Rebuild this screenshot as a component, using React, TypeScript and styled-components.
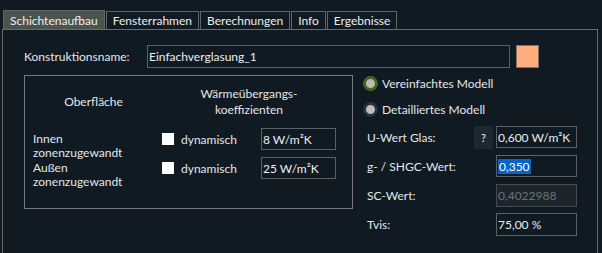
import React from 'react';
import styled, { createGlobalStyle } from 'styled-components';

const GlobalStyle = createGlobalStyle`
  body {
    margin: 0;
    background: #0f1a22;
    color: #e4e6e8;
    font-family: Lato, "Noto Sans", sans-serif;
    font-size: 12px;
  }
`;

const Page = styled.div`
  width: 602px;
  height: 253px;
  overflow: hidden;
  box-sizing: border-box;
  padding: 10px 0 0 2px;
`;

const TabBar = styled.div`
  display: flex;
  align-items: flex-end;
  gap: 1px;
  height: 19px;
  padding-left: 1px;
`;

const Tab = styled.div<{ $active?: boolean }>`
  box-sizing: border-box;
  height: ${p => (p.$active ? '19px' : '18px')};
  padding: 0 6px;
  display: flex;
  align-items: center;
  border: 1px solid #5f6467;
  border-bottom: none;
  background: ${p => (p.$active ? '#4b534c' : 'transparent')};
  color: #eceeef;
  white-space: nowrap;
`;

const Panel = styled.div`
  box-sizing: border-box;
  width: 596px;
  height: 240px;
  border: 1px solid #696d70;
  padding: 15px 0 0 18px;
`;

const NameRow = styled.div`
  display: grid;
  grid-template-columns: 120px 363px 23px;
  column-gap: 6px;
  align-items: center;
  height: 23px;
`;

const NameLabel = styled.span`
  padding-left: 3px;
`;

const Field = styled.div<{ $disabled?: boolean; $h?: number }>`
  box-sizing: border-box;
  height: ${p => p.$h ?? 22}px;
  border: 1px solid ${p => (p.$disabled ? '#454b50' : '#5c6165')};
  background: ${p => (p.$disabled ? '#1c252c' : 'transparent')};
  color: ${p => (p.$disabled ? '#6c7379' : '#eceeef')};
  display: flex;
  align-items: center;
  padding-left: 1px;
  white-space: nowrap;
`;

const Selected = styled.span`
  background: #0a63c6;
  color: #ffffff;
  padding: 0 1px;
`;

const Swatch = styled.div`
  box-sizing: border-box;
  width: 23px;
  height: 23px;
  background: #ffae80;
  border: 1px solid #8d6c5c;
`;

const MainRow = styled.div`
  display: flex;
  margin-top: 2px;
`;

const GroupBox = styled.div`
  box-sizing: border-box;
  width: 329px;
  height: 134px;
  margin-top: 5px;
  margin-left: 3px;
  border: 1px solid #767a7d;
  padding-top: 10px;
`;

const GroupGrid = styled.div`
  display: grid;
  grid-template-columns: 137px 99px 75px;
  grid-template-rows: 35px 22px 22px;
  row-gap: 7px;
`;

const HeadCell = styled.div<{ $span?: number }>`
  grid-column: span ${p => p.$span ?? 1};
  height: 32px;
  display: flex;
  align-items: center;
  justify-content: center;
  text-align: center;
  line-height: 16px;
`;

const SurfaceLabel = styled.div`
  padding: 4px 0 0 8px;
  line-height: 14px;
`;

const CheckCell = styled.div`
  display: flex;
  align-items: center;
  gap: 7px;
`;

const CheckBox = styled.span`
  width: 12px;
  height: 12px;
  background: #ffffff;
`;

const RightCol = styled.div`
  margin-left: 7px;
  width: 225px;
`;

const RadioRow = styled.div`
  display: flex;
  align-items: center;
  gap: 4px;
  height: 26px;
  padding-left: 3px;
`;

const Radio = styled.span<{ $on?: boolean }>`
  box-sizing: border-box;
  width: 15px;
  height: 15px;
  border-radius: 50%;
  border: 3px solid ${p => (p.$on ? '#46651c' : '#2b3238')};
  background: ${p => (p.$on ? '#b9bdb3' : '#bdbfc1')};
`;

const FormGrid = styled.div`
  display: grid;
  grid-template-columns: 114px 19px 84px;
  grid-auto-rows: 22px;
  row-gap: 7px;
  margin-top: 4px;
  align-items: center;
`;

const FormLabel = styled.span<{ $wide?: boolean }>`
  padding-left: 7px;
  grid-column: ${p => (p.$wide ? 'span 2' : 'auto')};
`;

const HelpButton = styled.div`
  height: 23px;
  display: flex;
  align-items: center;
  justify-content: center;
  background: #1e2830;
  font-size: 11px;
  color: #f0f0f0;
`;

const FormField = styled(Field)`
  margin-left: 3px;
`;

const tabs = ['Schichtenaufbau', 'Fensterrahmen', 'Berechnungen', 'Info', 'Ergebnisse'];

const App: React.FC = () => {
  return (
    <Page>
      <GlobalStyle />
      <TabBar>
        {tabs.map((t, i) => (
          <Tab key={t} $active={i === 0}>{t}</Tab>
        ))}
      </TabBar>
      <Panel>
        <NameRow>
          <NameLabel>Konstruktionsname:</NameLabel>
          <Field $h={23}>Einfachverglasung_1</Field>
          <Swatch />
        </NameRow>
        <MainRow>
          <GroupBox>
            <GroupGrid>
              <HeadCell>Oberfläche</HeadCell>
              <HeadCell $span={2}>Wärmeübergangs-<br />koeffizienten</HeadCell>
              <SurfaceLabel>Innen<br />zonenzugewandt</SurfaceLabel>
              <CheckCell><CheckBox />dynamisch</CheckCell>
              <Field>8 W/m²K</Field>
              <SurfaceLabel>Außen<br />zonenzugewandt</SurfaceLabel>
              <CheckCell><CheckBox />dynamisch</CheckCell>
              <Field>25 W/m²K</Field>
            </GroupGrid>
          </GroupBox>
          <RightCol>
            <RadioRow><Radio $on />Vereinfachtes Modell</RadioRow>
            <RadioRow><Radio />Detailliertes Modell</RadioRow>
            <FormGrid>
              <FormLabel>U-Wert Glas:</FormLabel>
              <HelpButton>?</HelpButton>
              <FormField>0,600 W/m²K</FormField>
              <FormLabel $wide>g- / SHGC-Wert:</FormLabel>
              <FormField><Selected>0,350</Selected></FormField>
              <FormLabel $wide>SC-Wert:</FormLabel>
              <FormField $disabled $h={23}>0,4022988</FormField>
              <FormLabel $wide>Tvis:</FormLabel>
              <FormField $h={23}>75,00 %</FormField>
            </FormGrid>
          </RightCol>
        </MainRow>
      </Panel>
    </Page>
  );
};

export default App;
